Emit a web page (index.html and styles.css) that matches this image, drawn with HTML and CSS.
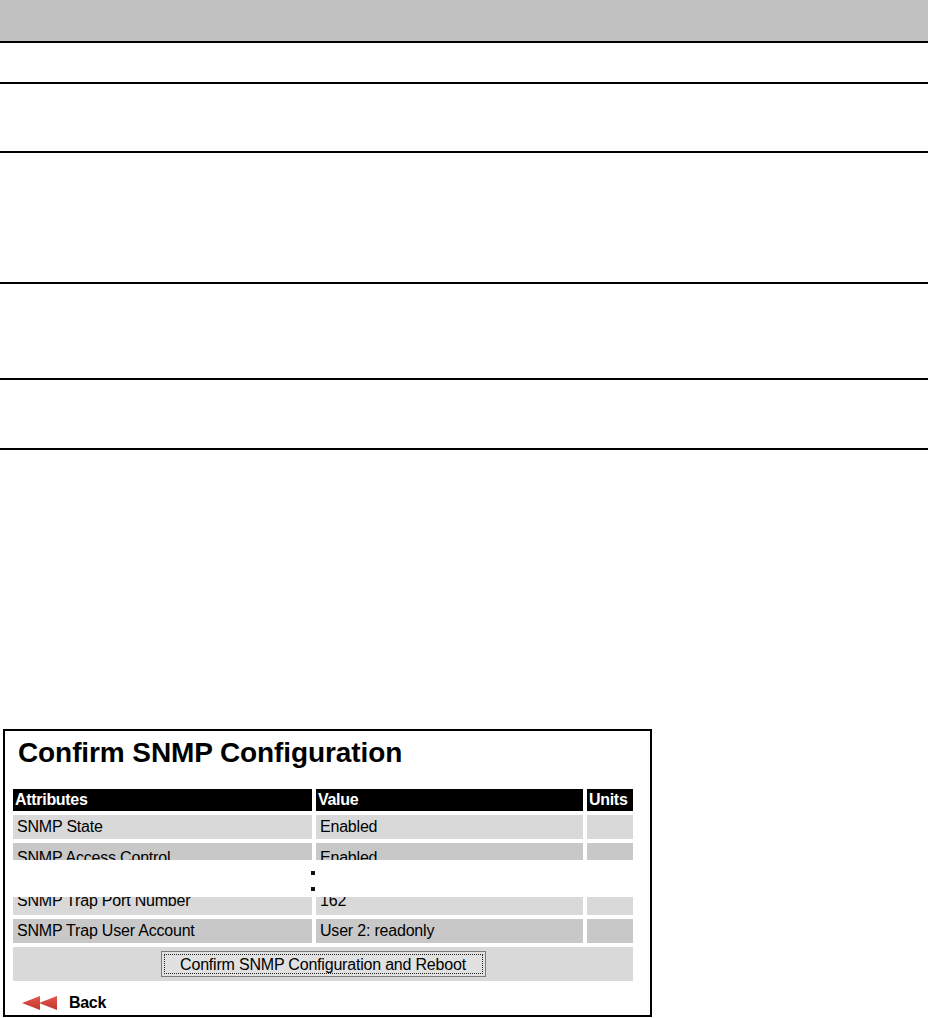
FILE: index.html
```html
<!DOCTYPE html>
<html>
<head>
<meta charset="utf-8">
<title>Confirm SNMP Configuration</title>
<link rel="stylesheet" href="styles.css">
</head>
<body>
<div class="doc-table">
  <div class="doc-head"></div>
  <div class="doc-row r1"></div>
  <div class="doc-row r2"></div>
  <div class="doc-row r3"></div>
  <div class="doc-row r4"></div>
  <div class="doc-row r5"></div>
</div>

<div class="shot">
  <h1 class="title">Confirm SNMP Configuration</h1>

  <div class="clip clip-top">
    <table class="attrs">
      <colgroup><col class="c-attr"><col class="c-val"><col class="c-unit"></colgroup>
      <tr class="head"><th>Attributes</th><th>Value</th><th>Units</th></tr>
      <tr class="light"><td>SNMP State</td><td>Enabled</td><td></td></tr>
      <tr class="dark cut-low"><td>SNMP Access Control</td><td>Enabled</td><td></td></tr>
    </table>
  </div>

  <div class="ellipsis"><span class="dot"></span><span class="dot"></span></div>

  <div class="clip clip-bottom">
    <table class="attrs shifted">
      <colgroup><col class="c-attr"><col class="c-val"><col class="c-unit"></colgroup>
      <tr class="light cut-high"><td>SNMP Trap Port Number</td><td>162</td><td></td></tr>
      <tr class="dark"><td>SNMP Trap User Account</td><td>User 2: readonly</td><td></td></tr>
      <tr class="light action"><td colspan="3"><button class="confirm" type="button"><span class="focus">Confirm SNMP Configuration and Reboot</span></button></td></tr>
    </table>
  </div>

  <div class="back">
    <svg class="arrows" width="36" height="14" viewBox="0 0 36 14" aria-hidden="true">
      <defs>
        <linearGradient id="g" x1="0" y1="0" x2="0" y2="1">
          <stop offset="0" stop-color="#e2574c"/>
          <stop offset="1" stop-color="#c4362d"/>
        </linearGradient>
      </defs>
      <polygon points="0,7 18,0 18,14" fill="url(#g)"/>
      <polygon points="17,7 35,0 35,14" fill="url(#g)"/>
    </svg>
    <span class="back-text">Back</span>
  </div>
</div>
</body>
</html>
```

FILE: styles.css
```css
html, body {
  margin: 0;
  padding: 0;
  background: #fff;
}

body {
  font-family: "Liberation Sans", Arial, sans-serif;
  color: #000;
}

/* top document table */
.doc-table {
  width: 928px;
}

.doc-head {
  height: 41px;
  background: #c0c0c0;
  border-bottom: 2px solid #000;
}

.doc-row {
  border-bottom: 2px solid #000;
}

.r1 { height: 39px; }
.r2 { height: 67px; }
.r3 { height: 129px; }
.r4 { height: 94px; }
.r5 { height: 68px; }

/* screenshot box */
.shot {
  box-sizing: border-box;
  width: 649px;
  height: 288px;
  margin: 279px 0 0 3px;
  border: 2px solid #000;
  display: flex;
  flex-direction: column;
}

.title {
  margin: 6px 0 16px 13px;
  font-size: 28px;
  line-height: 32px;
  font-weight: bold;
  letter-spacing: -0.1px;
}

.clip {
  overflow: hidden;
  flex: none;
}

.clip-top {
  height: 75px;
}

.clip-bottom {
  height: 88px;
}

.attrs {
  table-layout: fixed;
  border-collapse: separate;
  border-spacing: 4px;
  width: 628px;
  margin-left: 4px;
  font-size: 16px;
}

.attrs.shifted {
  margin-top: -10px;
}

.c-attr { width: 299px; }
.c-val { width: 267px; }
.c-unit { width: 46px; }

.attrs th {
  height: 22px;
  padding: 0 2px;
  background: #000;
  color: #fff;
  text-align: left;
  font-weight: bold;
  letter-spacing: -0.3px;
  box-sizing: border-box;
  white-space: nowrap;
  overflow: hidden;
}

.attrs td {
  height: 24px;
  padding: 0 4px;
  box-sizing: border-box;
  white-space: nowrap;
  letter-spacing: -0.2px;
}

.cut-low td {
  padding-top: 5px;
}

.cut-high td {
  padding-bottom: 5px;
}

.light td { background: #d9d9d9; }
.dark td { background: #c8c8c8; }

.action td {
  height: 34px;
  text-align: center;
  padding: 0;
}

.confirm {
  width: 325px;
  height: 26px;
  margin: 0;
  padding: 2px;
  border: 1px solid #7a7a7a;
  background: #e1e1e1;
  font-family: "Liberation Sans", Arial, sans-serif;
  font-size: 16px;
  color: #000;
  display: inline-block;
  vertical-align: middle;
  box-sizing: border-box;
}

.focus {
  display: block;
  height: 20px;
  line-height: 19px;
  box-sizing: border-box;
  border: 1px dotted #222;
  letter-spacing: -0.2px;
}

.ellipsis {
  height: 37px;
  flex: none;
  display: flex;
  flex-direction: column;
  align-items: flex-start;
  padding-left: 306px;
  box-sizing: border-box;
  padding-top: 11px;
  gap: 12px;
}

.dot {
  width: 4px;
  height: 4px;
  background: #111;
}

.back {
  display: flex;
  align-items: center;
  height: 30px;
  padding: 5px 0 0 17px;
  box-sizing: border-box;
}

.arrows {
  display: block;
}

.back-text {
  margin-left: 11px;
  font-size: 16px;
  font-weight: bold;
  letter-spacing: -0.3px;
}
```
